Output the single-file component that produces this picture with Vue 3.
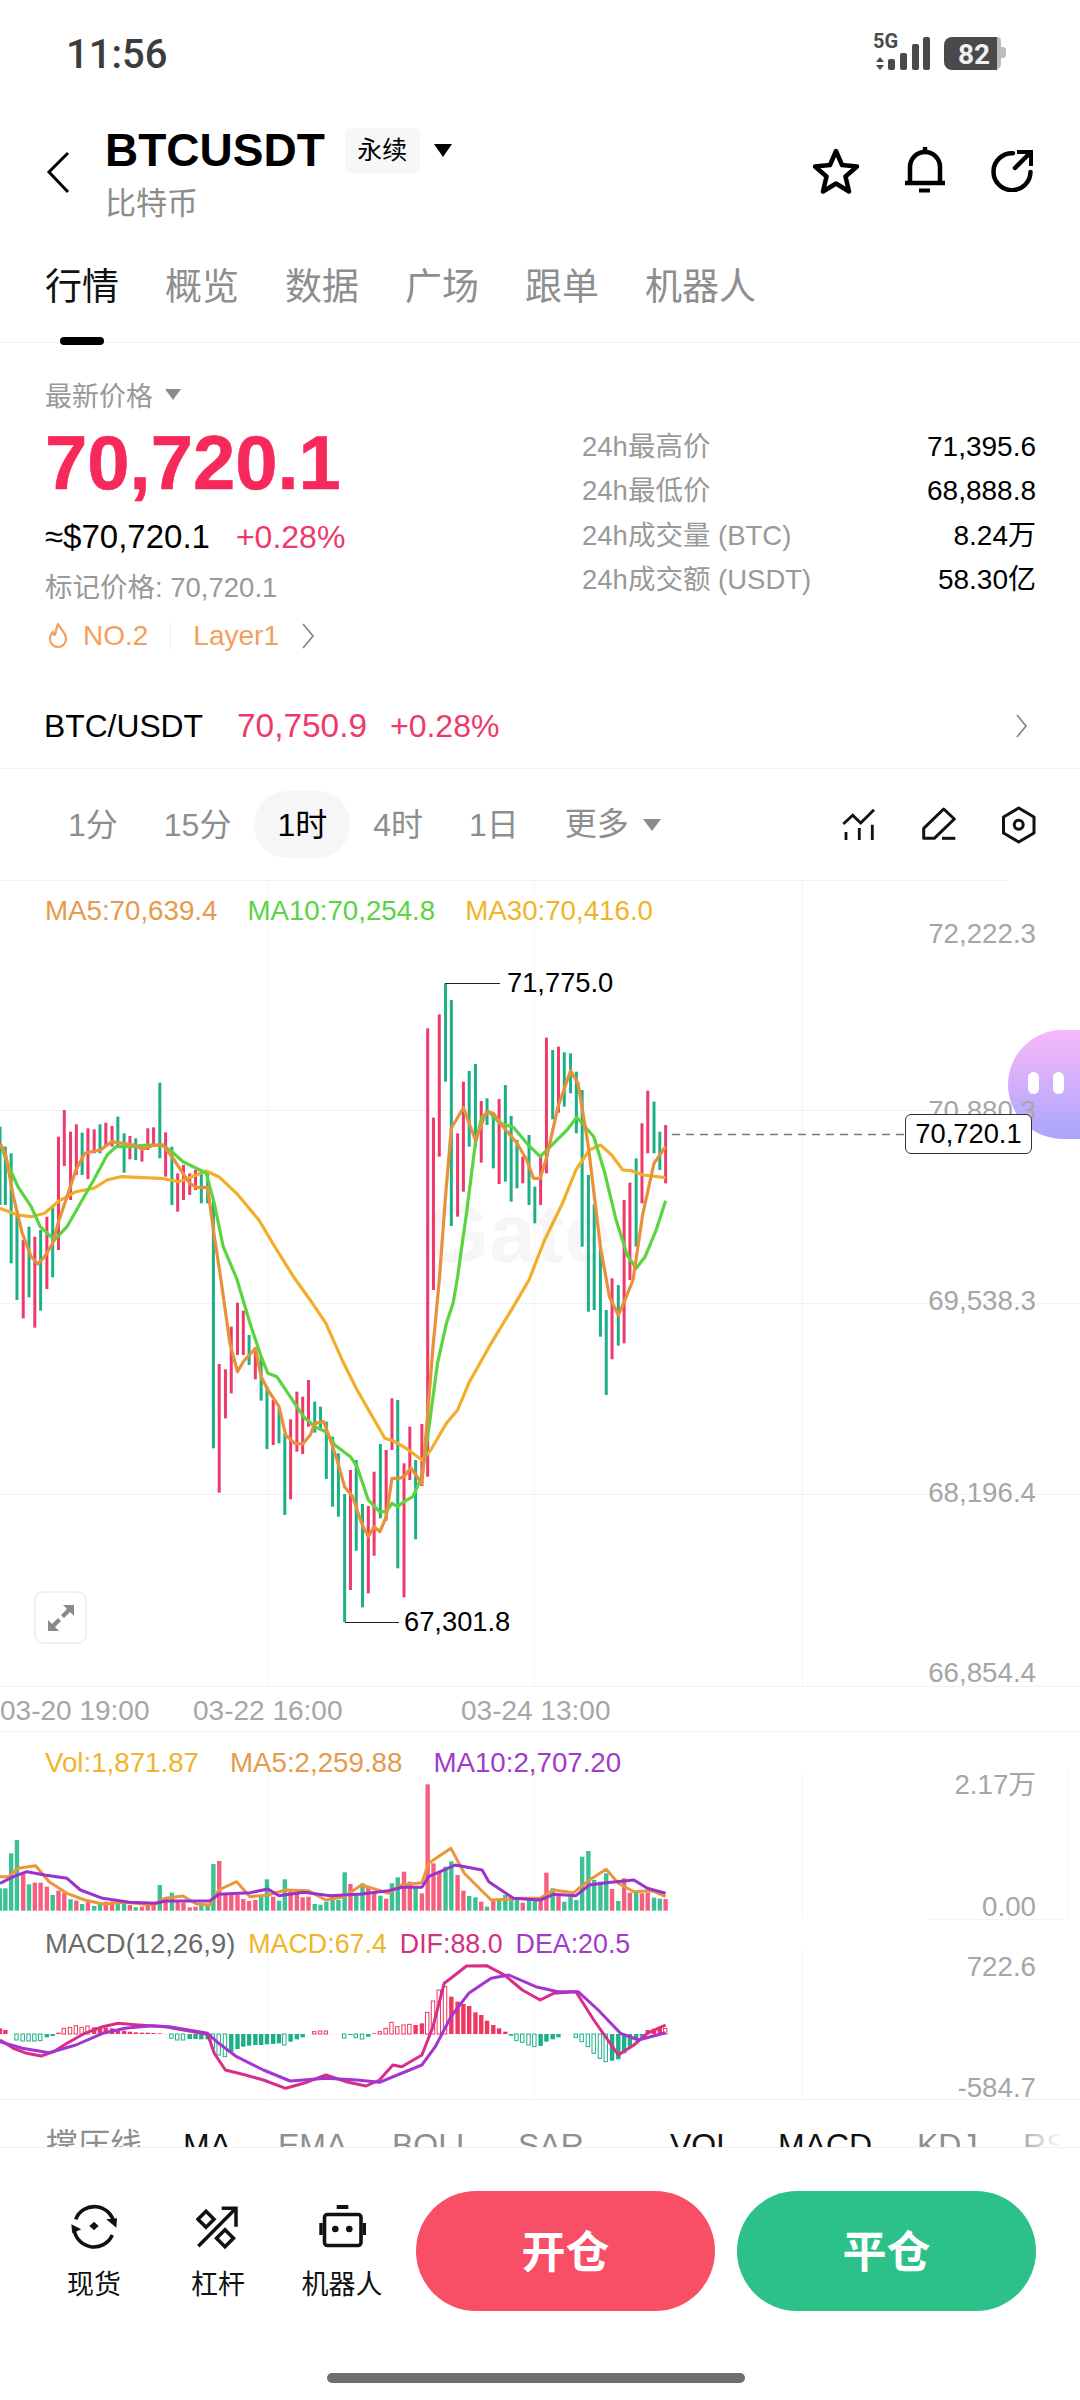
<template>
  <div class="page">
    <!-- 状态栏 -->
    <div class="status-bar">
      <span class="time">11:56</span>
      <svg class="status-icons" width="140" height="40" viewBox="0 0 140 40">
        <text x="0" y="13" class="net">5G</text>
        <path d="M7 22l4 5H3zM7 35l4-5H3z" fill="#4a4a4a" />
        <rect x="15" y="24" width="7" height="11" rx="2" fill="#4a4a4a" />
        <rect x="27" y="18" width="7" height="17" rx="2" fill="#4a4a4a" />
        <rect x="39" y="9" width="7" height="26" rx="2" fill="#4a4a4a" />
        <rect x="50" y="2" width="7" height="33" rx="2" fill="#4a4a4a" />
        <path d="M120 2h4a4 4 0 0 1 4 4v6h2a3 3 0 0 1 3 3v5a3 3 0 0 1-3 3h-2v6a6 6 0 0 1-6 6h-4z" fill="#bcbcbc" />
        <path d="M79 2h45v33H79a8 8 0 0 1-8-8V10a8 8 0 0 1 8-8z" fill="#4a4a4a" />
        <text x="85" y="29" class="batt">82</text>
      </svg>
    </div>

    <!-- 头部 -->
    <div class="header">
      <svg class="back" width="30" height="44" viewBox="0 0 30 44" fill="none">
        <path d="M24 3L5 22l19 20" stroke="#000" stroke-width="3" transform="translate(-1 0)" />
      </svg>
      <div class="title-box">
        <div class="title-line">
          <span class="symbol">BTCUSDT</span>
          <span class="perp">永续</span>
          <span class="tri tri-black"></span>
        </div>
        <div class="subname">比特币</div>
      </div>
      <div class="header-icons">
        <svg width="46" height="46" viewBox="0 0 46 46" fill="none" stroke="#000" stroke-width="4.5" stroke-linejoin="round">
          <path d="M23 3l6 14 15 1.500-11.500 10 3.500 15L23 35.500 10 43.500l3.500-15L2 18.500 17 17z" />
        </svg>
        <svg width="40" height="48" viewBox="0 0 40 48" fill="none" stroke="#000" stroke-width="4.500">
          <path d="M5 34V20a15 15 0 0 1 30 0v14" />
          <path d="M0 36h40" />
          <path d="M14 43.500h11" stroke-width="4" />
          <path d="M20 1v4" stroke-linecap="round" />
        </svg>
        <svg width="42" height="42" viewBox="0 0 42 42" fill="none" stroke="#000" stroke-width="4.500">
          <path d="M22 3.200A18.500 18.500 0 1 0 39.500 22" stroke-linecap="round" />
          <path d="M24 18L39 3" stroke-linecap="round" />
          <path d="M26 2h14v14" stroke-width="4" />
        </svg>
      </div>
    </div>

    <!-- 标签 -->
    <div class="tabs">
      <span v-for="(t, i) in tabs" :key="t" class="tab" :class="{ active: i === 0 }">{{ t }}</span>
    </div>

    <!-- 价格 -->
    <div class="price-section">
      <div class="price-left">
        <div class="price-label">最新价格<span class="tri tri-gray"></span></div>
        <div class="last-price">70,720.1</div>
        <div class="approx">≈$70,720.1<span class="rise">+0.28%</span></div>
        <div class="mark">标记价格: 70,720.1</div>
        <div class="hot">
          <svg width="20" height="26" viewBox="0 0 20 26" fill="none">
            <path d="M10 1c1 4 8 8 8 15a8 8 0 0 1-16 0c0-3 1-5 3-7 0 2 1 3 2 3 1-3 1-7 3-11z" stroke="#f2a05c" stroke-width="2.200" stroke-linejoin="round" />
          </svg>
          <span class="hot-no">NO.2</span>
          <i class="hot-sep"></i>
          <span>Layer1</span>
          <svg class="hot-arrow" width="14" height="26" viewBox="0 0 14 26" fill="none">
            <path d="M2 1l10 12L2 25" stroke="#888" stroke-width="1.800" />
          </svg>
        </div>
      </div>
      <div class="stats">
        <div v-for="s in stats" :key="s.label" class="stat-row">
          <span class="stat-label">{{ s.label }}</span>
          <span class="stat-value">{{ s.value }}</span>
        </div>
      </div>
    </div>

    <!-- 现货 -->
    <div class="spot-row">
      <span class="spot-name">BTC/USDT</span>
      <span class="rise spot-price">70,750.9</span>
      <span class="rise spot-pct">+0.28%</span>
      <svg class="spot-arrow" width="12" height="24" viewBox="0 0 12 24" fill="none">
        <path d="M1 1l9 11-9 11" stroke="#888" stroke-width="1.800" />
      </svg>
    </div>

    <!-- 周期 -->
    <div class="interval-bar">
      <span v-for="(p, i) in periods" :key="p" class="period" :class="{ on: i === 2 }">{{ p }}</span>
      <span class="period more">更多<span class="tri tri-gray2"></span></span>
      <div class="tool-icons">
        <svg width="34" height="34" viewBox="0 0 34 34" fill="none" stroke="#111" stroke-width="2.800">
          <path d="M1.300 16l9.400-8.700 8 7.700L32 1.700" />
          <path d="M4 24v8M17.300 20v12M30.300 16.700V32" />
        </svg>
        <svg width="37" height="36" viewBox="0 0 37 36" fill="none" stroke="#111" stroke-width="3" stroke-linejoin="round">
          <path d="M2.700 21.300L22.700 2l10.600 10-20 19.300H2.700z" />
          <path d="M21 31.300h13.300" />
        </svg>
        <svg width="34" height="38" viewBox="0 0 34 38" fill="none" stroke="#111" stroke-width="3" stroke-linejoin="round">
          <path d="M16.700 2L32 11v16l-15.300 9-15.200-9V11z" />
          <circle cx="16.700" cy="18.700" r="4.500" />
        </svg>
      </div>
    </div>

    <!-- 主图 -->
    <div class="panel main-panel">
      <div class="bubble"><i></i><i></i></div>
      <svg class="plot" width="1080" height="806" viewBox="0 0 1080 806">
        <path d="M0 0.500H1008M0 230.500H1008M0 423.500H1080M0 614.500H1080" stroke="#f3f3f3" />
        <path d="M267.500 0V806M534.500 0V806M802.500 0V806" stroke="#f5f5f5" />
        <text x="424" y="382" class="mark-logo">Gate</text>
        <rect v-for="(c, i) in candles" :key="i" :x="c.x" :y="c.y" width="3" :height="c.h" :fill="c.color" />
        <polyline :points="ma30" fill="none" stroke="#f2ae2a" stroke-width="3.200" stroke-linejoin="round" />
        <polyline :points="ma10" fill="none" stroke="#5ad43f" stroke-width="3.200" stroke-linejoin="round" />
        <polyline :points="ma5" fill="none" stroke="#e8913a" stroke-width="3.200" stroke-linejoin="round" />
        <path d="M445 103.500H500M345 742.500H399" stroke="#222" stroke-width="1.200" fill="none" />
        <text x="507" y="112" class="ann">71,775.0</text>
        <text x="404" y="751" class="ann">67,301.8</text>
        <text x="1036" y="63" class="axis" text-anchor="end">72,222.3</text>
        <text x="1036" y="240" class="axis" text-anchor="end">70,880.3</text>
        <text x="1036" y="430" class="axis" text-anchor="end">69,538.3</text>
        <text x="1036" y="622" class="axis" text-anchor="end">68,196.4</text>
        <text x="1036" y="802" class="axis" text-anchor="end">66,854.4</text>
        <path d="M672 254.500H905" stroke="#777" stroke-width="1.500" stroke-dasharray="8 6" />
      </svg>
      <div class="legend main-legend">
        <span class="c-ma5">MA5:70,639.4</span>
        <span class="c-ma10">MA10:70,254.8</span>
        <span class="c-ma30">MA30:70,416.0</span>
      </div>
      <div class="last-tag">70,720.1</div>
      <div class="expand">
        <svg width="30" height="30" viewBox="0 0 30 30" fill="#8a8a8a">
          <path d="M17 2h11v11l-4-4-6 6-3-3 6-6zM13 28H2V17l4 4 6-6 3 3-6 6z" />
        </svg>
      </div>
    </div>

    <!-- 时间轴 -->
    <div class="time-axis">
      <span class="t1">03-20 19:00</span>
      <span class="t2">03-22 16:00</span>
      <span class="t3">03-24 13:00</span>
    </div>

    <!-- 成交量 -->
    <div class="panel vol-panel">
      <svg class="plot" width="1080" height="188" viewBox="0 0 1080 188">
        <path d="M267.500 38V187M534.500 38V187M802.500 38V187M1068.500 38V187" stroke="#f6f6f6" />
        <path d="M930 187.500H1068" stroke="#f5f5f5" />
        <rect v-for="(b, i) in volBars" :key="i" :x="b.x" :y="b.y" width="4.400" :height="b.h" :fill="b.color" />
        <polyline :points="volMa5" fill="none" stroke="#ea973a" stroke-width="3" stroke-linejoin="round" />
        <polyline :points="volMa10" fill="none" stroke="#9c32cc" stroke-width="3" stroke-linejoin="round" />
        <text x="1036" y="62" class="axis" text-anchor="end">2.17万</text>
        <text x="1036" y="184" class="axis" text-anchor="end">0.00</text>
      </svg>
      <div class="legend vol-legend">
        <span class="c-vol">Vol:1,871.87</span>
        <span class="c-ma5">MA5:2,259.88</span>
        <span class="c-purple">MA10:2,707.20</span>
      </div>
    </div>

    <!-- MACD -->
    <div class="panel macd-panel">
      <svg class="plot" width="1080" height="180" viewBox="0 0 1080 180">
        <path d="M267.500 30V180M534.500 30V180M802.500 30V180" stroke="#f6f6f6" />
        <path d="M0 114.500H670" stroke="#f6f6f6" />
        <rect
          v-for="(b, i) in macdBars"
          :key="i"
          :x="b.x"
          :y="b.y"
          :width="b.hollow ? 3.400 : 4.400"
          :height="b.h"
          :fill="b.hollow ? '#fff' : b.color"
          :stroke="b.hollow ? b.color : 'none'"
          stroke-width="1"
        />
        <polyline :points="dif" fill="none" stroke="#d92d8a" stroke-width="3" stroke-linejoin="round" />
        <polyline :points="dea" fill="none" stroke="#a535d0" stroke-width="3" stroke-linejoin="round" />
        <text x="1036" y="56" class="axis" text-anchor="end">722.6</text>
        <text x="1036" y="177" class="axis" text-anchor="end">-584.7</text>
      </svg>
      <div class="legend macd-legend">
        <span class="c-gray">MACD(12,26,9)</span>
        <span class="c-vol">MACD:67.4</span>
        <span class="c-dif">DIF:88.0</span>
        <span class="c-purple">DEA:20.5</span>
      </div>
    </div>

    <!-- 指标切换，被底栏遮住 -->
    <div class="indicators">
      <span v-for="n in indicators" :key="n.name" :class="{ dark: n.on }" :style="{ width: n.w + 'px' }">{{ n.name }}</span>
    </div>

    <!-- 底栏 -->
    <div class="footer">
      <div class="footer-row">
        <div class="tool">
          <svg width="48" height="48" viewBox="0 0 48 48" fill="none" stroke="#111" stroke-width="3.600">
            <path d="M5.700 17.300A20 20 0 0 1 44 21" />
            <path d="M42.300 33A20 20 0 0 1 4 26" />
            <path d="M36.300 17.300L47 16.300l-.7 9.400zM1.300 22.300l10 5-9 4z" fill="#111" stroke="none" />
            <path d="M24 19.700l4.700 4.300-4.700 4.300-4.700-4.300z" fill="#111" stroke="none" />
          </svg>
          <span>现货</span>
        </div>
        <div class="tool">
          <svg width="44" height="48" viewBox="0 0 44 48" fill="none" stroke="#111" stroke-width="3.500">
            <path d="M2.300 44.300L39 7.300" />
            <path d="M25.700 6.300H40v18.400" />
            <path d="M10 9.300l8 8-8 8-8-8z" />
            <path d="M29 27.800l8.500 8.500-8.500 8.500-8.500-8.500z" />
          </svg>
          <span>杠杆</span>
        </div>
        <div class="tool">
          <svg width="48" height="48" viewBox="0 0 48 48" fill="none" stroke="#111" stroke-width="3.600">
            <rect x="6.500" y="12.500" width="36.500" height="31" rx="3" />
            <path d="M18.700 5h11.600" stroke-width="4" />
            <path d="M3 21v12M46.300 21v12" stroke-width="3.400" />
            <circle cx="17.300" cy="27" r="3.300" fill="#111" stroke="none" />
            <circle cx="31.300" cy="27" r="3.300" fill="#111" stroke="none" />
          </svg>
          <span>机器人</span>
        </div>
        <button class="trade open">开仓</button>
        <button class="trade close">平仓</button>
      </div>
      <div class="home-bar"></div>
    </div>
  </div>
</template>

<script setup>
const tabs = ['行情', '概览', '数据', '广场', '跟单', '机器人']
const periods = ['1分', '15分', '1时', '4时', '1日']

const stats = [
  { label: '24h最高价', value: '71,395.6' },
  { label: '24h最低价', value: '68,888.8' },
  { label: '24h成交量 (BTC)', value: '8.24万' },
  { label: '24h成交额 (USDT)', value: '58.30亿' },
]

const indicators = [
  { name: '撑压线', w: 137 },
  { name: 'MA', w: 95, on: true },
  { name: 'EMA', w: 114 },
  { name: 'BOLL', w: 126 },
  { name: 'SAR', w: 152 },
  { name: 'VOL', w: 108, on: true },
  { name: 'MACD', w: 139, on: true },
  { name: 'KDJ', w: 106 },
  { name: 'RSI', w: 60 },
]

const GREEN = '#1db088'
const PINK = '#ee3a6a'

// 数据按参考图量出来：x 除 2.24，y 除 3
const SX = 2.24
const SY = 3

// [x, 颜色, 上, 下]
const rawCandles = [
  [0, 'g', 740, 975], [12, 'g', 800, 975], [25, 'g', 820, 1150], [38, 'g', 1000, 1260], [52, 'p', 1080, 1315],
  [65, 'g', 1040, 1252], [78, 'p', 1070, 1343], [91, 'g', 1050, 1292], [105, 'p', 1010, 1227], [118, 'g', 975, 1192],
  [131, 'p', 770, 1110], [144, 'p', 690, 858], [158, 'p', 755, 960], [171, 'p', 733, 885], [184, 'g', 758, 885],
  [197, 'p', 745, 897], [211, 'p', 748, 820], [224, 'g', 733, 820], [237, 'p', 728, 800], [251, 'p', 738, 800],
  [264, 'g', 710, 800], [278, 'g', 760, 878], [291, 'p', 768, 838], [304, 'g', 775, 840], [318, 'p', 800, 845],
  [331, 'p', 745, 810], [344, 'p', 742, 800], [358, 'g', 608, 835], [371, 'p', 757, 890], [385, 'g', 800, 975],
  [398, 'p', 880, 995], [411, 'p', 855, 960], [425, 'p', 880, 945], [438, 'p', 870, 930], [451, 'g', 870, 970],
  [465, 'g', 880, 970], [478, 'g', 955, 1705], [491, 'p', 1452, 1838], [505, 'p', 1468, 1615], [518, 'p', 1340, 1540],
  [532, 'p', 1268, 1425], [545, 'p', 1292, 1425], [558, 'g', 1365, 1455], [572, 'p', 1410, 1498], [585, 'g', 1430, 1562],
  [598, 'g', 1520, 1707], [612, 'p', 1560, 1695], [625, 'g', 1585, 1690], [638, 'g', 1660, 1905], [651, 'p', 1618, 1858],
  [665, 'p', 1535, 1715], [678, 'p', 1550, 1722], [691, 'p', 1500, 1640], [705, 'g', 1565, 1658], [718, 'g', 1580, 1650],
  [731, 'g', 1625, 1797], [745, 'g', 1670, 1880], [758, 'g', 1720, 1910], [772, 'g', 1842, 2226], [785, 'p', 1770, 2130],
  [798, 'g', 1740, 2012], [812, 'g', 1872, 2182], [825, 'p', 1878, 2140], [838, 'p', 1775, 2027], [852, 'g', 1692, 1915],
  [865, 'p', 1710, 1922], [878, 'p', 1555, 1710], [891, 'g', 1560, 2065], [905, 'p', 1750, 2152], [918, 'p', 1640, 1800],
  [931, 'g', 1740, 1978], [945, 'p', 1632, 1818], [958, 'p', 445, 1790], [971, 'p', 713, 1230], [984, 'p', 403, 830],
  [998, 'g', 310, 605], [1011, 'g', 360, 1038], [1025, 'p', 760, 1010], [1038, 'p', 605, 935], [1051, 'g', 573, 800],
  [1065, 'g', 552, 800], [1078, 'p', 663, 848], [1091, 'g', 655, 735], [1105, 'g', 700, 865], [1118, 'p', 657, 912],
  [1132, 'g', 615, 905], [1145, 'g', 708, 965], [1158, 'g', 780, 925], [1171, 'p', 830, 910], [1185, 'g', 765, 975],
  [1198, 'g', 920, 1030], [1211, 'p', 830, 975], [1224, 'p', 473, 880], [1238, 'g', 510, 718], [1251, 'p', 500, 698],
  [1264, 'g', 517, 680], [1278, 'g', 520, 640], [1291, 'g', 575, 760], [1304, 'g', 630, 1100], [1318, 'g', 885, 1295],
  [1331, 'g', 973, 1290], [1345, 'g', 1100, 1370], [1358, 'g', 1290, 1545], [1371, 'p', 1195, 1438], [1385, 'g', 1215, 1397],
  [1398, 'p', 960, 1390], [1411, 'p', 908, 1200], [1425, 'g', 835, 1100], [1438, 'p', 730, 970], [1451, 'p', 632, 820],
  [1465, 'g', 665, 820], [1478, 'g', 755, 870], [1491, 'p', 735, 910],
]

const candles = rawCandles.map(([x, c, top, bottom]) => ({
  x: x / SX - 1.5,
  y: top / SY,
  h: (bottom - top) / SY,
  color: c === 'g' ? GREEN : PINK,
}))

const mainLine = (pts) => pts.map(([x, y]) => `${(x / SX).toFixed(1)},${(y / SY).toFixed(1)}`).join(' ')

const ma5 = mainLine([
  [0, 790], [12, 820], [30, 950], [50, 1060], [70, 1130], [85, 1152], [100, 1130], [118, 1090], [130, 1030], [150, 950],
  [170, 870], [190, 820], [205, 815], [225, 810], [250, 785], [275, 790], [300, 795], [320, 808], [340, 797], [365, 795],
  [385, 830], [410, 880], [425, 910], [440, 922], [465, 922], [478, 1050], [495, 1200], [515, 1390], [532, 1475], [545, 1445],
  [572, 1405], [585, 1490], [600, 1530], [625, 1580], [640, 1665], [660, 1690], [678, 1692], [695, 1665], [705, 1630], [725, 1625],
  [740, 1680], [755, 1740], [772, 1820], [790, 1850], [810, 1930], [825, 1970], [838, 1940], [851, 1955], [865, 1910], [878, 1795],
  [895, 1795], [905, 1790], [920, 1763], [945, 1810], [958, 1600], [970, 1400], [984, 1200], [998, 950], [1011, 745], [1038, 683],
  [1065, 780], [1090, 695], [1105, 700], [1130, 745], [1158, 790], [1180, 840], [1195, 895], [1210, 895], [1225, 830], [1250, 680],
  [1278, 572], [1295, 610], [1318, 800], [1345, 1100], [1365, 1250], [1385, 1305], [1400, 1260], [1418, 1200], [1440, 1000], [1465, 850],
  [1491, 800],
])

const ma10 = mainLine([
  [0, 790], [20, 860], [40, 920], [70, 980], [90, 1040], [122, 1080], [150, 1040], [180, 970], [210, 900], [240, 825],
  [260, 800], [290, 800], [330, 795], [365, 795], [385, 815], [410, 845], [440, 865], [462, 880], [480, 970], [500, 1100],
  [530, 1195], [560, 1330], [585, 1430], [600, 1480], [620, 1490], [650, 1550], [680, 1610], [705, 1640], [730, 1655], [750, 1695],
  [785, 1730], [800, 1760], [825, 1860], [850, 1895], [865, 1895], [878, 1870], [890, 1880], [905, 1865], [925, 1850], [945, 1790],
  [960, 1650], [980, 1450], [1000, 1330], [1015, 1270], [1025, 1190], [1045, 1000], [1065, 790], [1080, 710], [1095, 695], [1120, 730],
  [1150, 742], [1180, 790], [1210, 830], [1240, 790], [1270, 750], [1292, 712], [1330, 770], [1355, 880], [1380, 1020], [1405, 1125],
  [1425, 1165], [1445, 1130], [1470, 1050], [1491, 962],
])

const ma30 = mainLine([
  [0, 985], [40, 1005], [70, 1010], [100, 1000], [130, 965], [170, 935], [210, 925], [240, 900], [270, 890], [320, 893],
  [360, 895], [400, 905], [430, 890], [462, 873], [490, 890], [530, 940], [580, 1020], [620, 1110], [660, 1195], [700, 1270],
  [730, 1330], [770, 1450], [800, 1530], [830, 1600], [862, 1675], [880, 1682], [910, 1705], [945, 1740], [965, 1710], [1000, 1630],
  [1025, 1590], [1050, 1510], [1100, 1390], [1150, 1280], [1185, 1200], [1220, 1080], [1260, 970], [1290, 870], [1320, 810], [1345, 795],
  [1370, 825], [1395, 870], [1415, 872], [1440, 885], [1491, 893],
])

// 副图 y：1700 + z / 3，减去面板顶部
const VOL_TOP = 1732
const MACD_TOP = 1920
const subLine = (pts, top) => pts.map(([x, y]) => `${(x / SX).toFixed(1)},${(1700 + y / SY - top).toFixed(1)}`).join(' ')

const rawVol = [
  [0, 'g', 565], [12, 'g', 565], [25, 'g', 460], [38, 'g', 420], [52, 'p', 520], [65, 'g', 553], [78, 'p', 548], [91, 'p', 548], [105, 'p', 560],
  [118, 'g', 585], [131, 'p', 572], [144, 'p', 578], [158, 'g', 598], [171, 'p', 602], [184, 'g', 612], [197, 'p', 605], [211, 'g', 618],
  [224, 'g', 612], [237, 'p', 605], [251, 'p', 605], [264, 'g', 610], [278, 'g', 610], [291, 'p', 615], [304, 'g', 622], [318, 'p', 620],
  [331, 'p', 615], [344, 'p', 612], [358, 'g', 555], [371, 'p', 592], [385, 'g', 578], [398, 'p', 605], [411, 'p', 608], [425, 'p', 622],
  [438, 'p', 620], [451, 'g', 612], [465, 'g', 618], [478, 'g', 492], [491, 'p', 483], [505, 'p', 585], [518, 'p', 585], [532, 'p', 585],
  [545, 'p', 597], [558, 'p', 603], [572, 'p', 600], [585, 'g', 590], [598, 'g', 538], [612, 'p', 590], [625, 'g', 602], [638, 'g', 538],
  [651, 'p', 575], [665, 'p', 575], [678, 'p', 592], [691, 'p', 590], [705, 'g', 612], [718, 'g', 614], [731, 'g', 605], [745, 'g', 590],
  [758, 'g', 600], [772, 'g', 517], [785, 'p', 552], [798, 'g', 585], [812, 'g', 550], [825, 'p', 560], [838, 'p', 575], [852, 'g', 587],
  [865, 'p', 596], [878, 'g', 550], [891, 'g', 532], [905, 'p', 515], [918, 'p', 545], [931, 'g', 560], [945, 'p', 580], [958, 'p', 253],
  [971, 'p', 490], [984, 'p', 515], [998, 'g', 500], [1011, 'g', 484], [1025, 'p', 525], [1038, 'p', 572], [1051, 'g', 588], [1065, 'g', 592],
  [1078, 'p', 605], [1091, 'g', 620], [1105, 'p', 600], [1118, 'g', 600], [1132, 'g', 585], [1145, 'g', 595], [1158, 'g', 600], [1171, 'p', 608],
  [1185, 'g', 600], [1198, 'g', 600], [1211, 'p', 598], [1224, 'p', 518], [1238, 'g', 565], [1251, 'p', 585], [1264, 'g', 605], [1278, 'g', 590],
  [1291, 'g', 600], [1304, 'g', 470], [1318, 'g', 453], [1331, 'g', 540], [1345, 'g', 545], [1358, 'g', 520], [1371, 'p', 567], [1385, 'g', 603],
  [1398, 'p', 535], [1411, 'p', 578], [1425, 'g', 578], [1438, 'p', 580], [1451, 'p', 578], [1465, 'g', 593], [1478, 'g', 596], [1491, 'p', 597],
]

const volBars = rawVol.map(([x, c, top]) => ({
  x: x / SX - 2.2,
  y: 1700 + top / SY - VOL_TOP,
  h: (632 - top) / SY,
  color: c === 'g' ? '#3cc194' : '#f75f7e',
}))

const volMa5 = subLine([
  [0, 530], [20, 530], [40, 505], [80, 497], [110, 545], [150, 580], [190, 600], [230, 612], [280, 607], [340, 615],
  [370, 595], [410, 588], [440, 612], [470, 615], [490, 570], [530, 545], [560, 590], [600, 585], [640, 570], [690, 572],
  [730, 600], [770, 590], [810, 555], [870, 580], [900, 555], [945, 548], [960, 490], [1010, 445], [1040, 520], [1100, 600],
  [1170, 595], [1210, 595], [1240, 570], [1285, 578], [1320, 540], [1358, 508], [1385, 550], [1420, 575], [1460, 572], [1491, 590],
], VOL_TOP)

const volMa10 = subLine([
  [0, 550], [30, 530], [60, 515], [100, 525], [150, 535], [180, 570], [230, 595], [290, 607], [350, 610], [370, 603],
  [470, 603], [490, 583], [560, 578], [600, 567], [625, 587], [680, 577], [740, 587], [810, 582], [870, 572], [900, 562],
  [945, 562], [960, 530], [1020, 495], [1080, 510], [1095, 545], [1150, 595], [1210, 600], [1240, 583], [1290, 587], [1320, 555],
  [1358, 548], [1420, 540], [1450, 565], [1491, 580],
], VOL_TOP)

const ZERO = 1002
// [x, 端点 y, 是否空心]
const rawMacd = [
  [0, 985, 0], [12, 990, 0], [38, 1020, 1], [52, 1023, 1], [65, 1023, 1], [78, 1023, 1], [91, 1022, 1], [105, 1012, 0], [118, 1008, 0], [131, 998, 0],
  [144, 985, 1], [158, 982, 1], [171, 977, 1], [184, 982, 1], [197, 978, 1], [211, 982, 0], [224, 982, 0], [237, 983, 0], [251, 985, 0], [264, 988, 0],
  [278, 992, 0], [291, 995, 0], [304, 997, 0], [318, 998, 0], [331, 998, 0], [344, 999, 0], [358, 1000, 0], [385, 1015, 1], [398, 1020, 1], [411, 1020, 1],
  [425, 1017, 0], [438, 1017, 0], [451, 1018, 0], [465, 1018, 0], [478, 1045, 1], [491, 1065, 1], [505, 1070, 1], [518, 1055, 0], [532, 1047, 0], [545, 1040, 0],
  [558, 1037, 0], [572, 1035, 0], [585, 1035, 0], [598, 1033, 0], [612, 1032, 0], [625, 1030, 0], [638, 1035, 1], [651, 1025, 0], [665, 1018, 0], [678, 1012, 0],
  [705, 995, 1], [718, 993, 1], [731, 993, 1], [772, 1014, 1], [785, 1005, 0], [798, 1013, 1], [812, 1017, 1], [825, 1010, 0], [838, 1000, 0], [852, 995, 1],
  [865, 985, 1], [878, 967, 1], [891, 980, 1], [905, 975, 1], [918, 973, 1], [931, 975, 0], [945, 970, 0], [958, 937, 1], [971, 903, 1], [984, 870, 1],
  [998, 860, 1], [1011, 890, 0], [1025, 905, 0], [1038, 912, 0], [1051, 918, 0], [1065, 937, 0], [1078, 945, 0], [1091, 962, 0], [1105, 975, 0], [1118, 985, 0],
  [1132, 995, 0], [1145, 1007, 0], [1158, 1022, 1], [1171, 1027, 1], [1185, 1035, 1], [1198, 1040, 1], [1211, 1038, 0], [1224, 1025, 0], [1238, 1018, 0], [1251, 1012, 0],
  [1291, 1012, 1], [1304, 1025, 1], [1318, 1040, 1], [1331, 1060, 1], [1345, 1075, 1], [1358, 1085, 1], [1371, 1082, 0], [1385, 1078, 0], [1398, 1060, 0], [1411, 1040, 0],
  [1425, 1020, 0], [1438, 1010, 0], [1451, 990, 0], [1465, 986, 0], [1478, 980, 0], [1491, 985, 1],
]

const macdBars = rawMacd.map(([x, end, hollow]) => ({
  x: x / SX - 2.2,
  y: 1700 + Math.min(end, ZERO) / SY - MACD_TOP,
  h: Math.abs(end - ZERO) / SY,
  hollow: !!hollow,
  color: end > ZERO ? '#1db088' : '#f0385f',
}))

const dif = subLine([
  [0, 1020], [30, 1045], [60, 1060], [92, 1068], [120, 1055], [150, 1030], [190, 1000], [230, 980], [265, 970], [310, 975],
  [370, 980], [420, 992], [465, 1003], [480, 1060], [505, 1110], [550, 1125], [590, 1140], [640, 1165], [680, 1150], [730, 1125],
  [775, 1145], [820, 1158], [850, 1140], [880, 1095], [900, 1100], [945, 1065], [970, 980], [995, 850], [1010, 835], [1045, 798],
  [1090, 797], [1130, 825], [1170, 870], [1210, 900], [1240, 880], [1290, 875], [1330, 960], [1385, 1065], [1420, 1035], [1450, 1000],
  [1491, 975],
], MACD_TOP)

const dea = subLine([
  [0, 1025], [50, 1045], [110, 1058], [170, 1035], [230, 1000], [280, 985], [340, 977], [380, 980], [465, 1000], [490, 1030],
  [530, 1070], [590, 1110], [650, 1143], [730, 1135], [800, 1140], [850, 1147], [890, 1125], [945, 1095], [975, 1040], [1010, 950],
  [1050, 880], [1100, 835], [1140, 825], [1200, 860], [1250, 875], [1295, 875], [1340, 930], [1390, 1000], [1430, 1020], [1491, 998],
], MACD_TOP)
</script>

<style>
html,
body {
  margin: 0;
  background: #fff;
}
</style>

<style scoped>
.page {
  width: 1080px;
  height: 2400px;
  overflow: hidden;
  background: #fff;
  color: #000;
  font-family: "Liberation Sans", "Noto Sans CJK SC", sans-serif;
}

.tri {
  display: inline-block;
  width: 0;
  height: 0;
  border-style: solid;
  border-color: transparent;
}

/* 状态栏 */
.status-bar {
  height: 110px;
  position: relative;
}

.time {
  position: absolute;
  left: 66px;
  top: 32px;
  font-family: Roboto, sans-serif;
  font-size: 40px;
  font-weight: 500;
  line-height: 46px;
  color: #3c3c3c;
}

.status-icons {
  position: absolute;
  left: 873px;
  top: 35px;
  overflow: visible;
}

.net {
  font: 700 20px Roboto, sans-serif;
  fill: #4a4a4a;
}

.batt {
  font: 700 28px Roboto, sans-serif;
  fill: #f0f0f0;
}

/* 头部 */
.header {
  height: 140px;
  display: flex;
  position: relative;
}

.back {
  margin: 40px 0 0 45px;
}

.title-box {
  margin-left: 30px;
}

.title-line {
  display: flex;
  align-items: center;
  height: 70px;
  margin-top: 5px;
}

.symbol {
  font-size: 46px;
  font-weight: 700;
}

.perp {
  width: 75px;
  height: 45px;
  margin-left: 20px;
  border-radius: 6px;
  background: #f7f7f7;
  font-size: 25px;
  line-height: 45px;
  text-align: center;
}

.tri-black {
  margin-left: 14px;
  border-width: 13px 9px 0;
  border-top-color: #000;
}

.subname {
  margin-top: -1px;
  font-size: 31px;
  line-height: 40px;
  color: #8c8c8c;
}

.header-icons {
  position: absolute;
  left: 813px;
  top: 37px;
  display: flex;
  align-items: center;
  gap: 46px;
}

/* 标签 */
.tabs {
  height: 93px;
  box-sizing: border-box;
  display: flex;
  gap: 46px;
  padding-left: 45px;
  border-bottom: 1px solid #f2f2f2;
}

.tab {
  position: relative;
  height: 74px;
  margin-top: 9px;
  font-size: 37px;
  line-height: 58px;
  color: #8e8e8e;
}

.tab.active {
  color: #111;
}

.tab.active::after {
  content: "";
  position: absolute;
  left: 15px;
  bottom: -12px;
  width: 44px;
  height: 8px;
  border-radius: 4px;
  background: #000;
}

/* 价格 */
.price-section {
  height: 339px;
  box-sizing: border-box;
  display: flex;
  justify-content: space-between;
  padding: 35px 44px 0 45px;
}

.price-label {
  display: flex;
  align-items: center;
  height: 32px;
  font-size: 27px;
  color: #999;
}

.tri-gray {
  margin-left: 12px;
  border-width: 11px 8.500px 0;
  border-top-color: #8c8c8c;
}

.last-price {
  height: 104px;
  font-size: 76px;
  font-weight: 700;
  line-height: 106px;
  color: #f6295a;
  -webkit-text-stroke: 0.6px #f6295a;
}

.approx {
  height: 46px;
  font-size: 33px;
  line-height: 46px;
  white-space: nowrap;
}

.rise {
  color: #ee3a6a;
}

.approx .rise {
  margin-left: 26px;
  font-size: 32px;
}

.mark {
  height: 46px;
  margin-top: 4px;
  font-size: 27.500px;
  line-height: 48px;
  color: #999;
}

.hot {
  display: flex;
  align-items: center;
  height: 48px;
  margin-top: 2px;
  padding-left: 3px;
  font-size: 28px;
  color: #f2a05c;
}

.hot-no {
  margin-left: 15px;
}

.hot-sep {
  width: 1px;
  height: 30px;
  margin: 0 22px;
  background: #f0f0f0;
}

.hot-arrow {
  margin-left: 22px;
}

.stats {
  width: 454px;
  padding-top: 47px;
}

.stat-row {
  display: flex;
  justify-content: space-between;
  height: 44.400px;
  font-size: 27.500px;
  line-height: 44px;
}

.stat-label {
  color: #999;
}

.stat-value {
  font-size: 28px;
}

/* 现货 */
.spot-row {
  height: 87px;
  box-sizing: border-box;
  display: flex;
  align-items: center;
  padding: 2px 52px 0 44px;
  border-bottom: 1px solid #f2f2f2;
  font-size: 32px;
  white-space: nowrap;
}

.spot-name {
  font-size: 31.800px;
}

.spot-price {
  margin-left: 34px;
  font-size: 33.400px;
}

.spot-pct {
  margin-left: 23px;
}

.spot-arrow {
  margin-left: auto;
}

/* 周期 */
.interval-bar {
  height: 111px;
  box-sizing: border-box;
  display: flex;
  align-items: center;
  padding: 0 44px 0 45px;
}

.period {
  height: 67px;
  padding: 0 23px;
  border-radius: 33px;
  font-size: 32px;
  line-height: 69px;
  color: #8e8e8e;
}

.period.on {
  background: #f6f6f6;
  color: #000;
}

.more {
  display: flex;
  align-items: center;
  padding-right: 0;
}

.tri-gray2 {
  margin-left: 14px;
  border-width: 12px 9px 0;
  border-top-color: #8c8c8c;
}

.tool-icons {
  display: flex;
  align-items: center;
  gap: 44.500px;
  margin-left: auto;
}

/* 图表 */
.panel {
  position: relative;
}

.plot {
  display: block;
  position: relative;
  overflow: visible;
}

.main-panel {
  height: 806px;
}

.axis {
  font-size: 27.700px;
  fill: #a6a6a6;
}

.ann {
  font-size: 27.300px;
  fill: #000;
}

.mark-logo {
  font-size: 84px;
  font-weight: 700;
  fill: #f6f6f6;
}

.legend {
  position: absolute;
  top: 0;
  left: 45px;
  display: flex;
  font-size: 27.700px;
  line-height: 34px;
  white-space: nowrap;
}

.main-legend {
  top: 14px;
  gap: 30px;
}

.vol-legend {
  top: 14px;
  gap: 31px;
}

.macd-legend {
  top: 7px;
  gap: 13px;
  font-size: 26.800px;
}

.c-ma5 {
  color: #e59a4c;
}

.c-ma10 {
  color: #5ad43f;
}

.c-ma30,
.c-vol {
  color: #f0b429;
}

.c-purple {
  color: #a03cc8;
}

.c-gray {
  color: #6a6a6a;
  font-size: 27.400px;
}

.c-dif {
  color: #d42f83;
}

.bubble {
  position: absolute;
  left: 1008px;
  top: 150px;
  width: 72px;
  height: 109px;
  display: flex;
  justify-content: center;
  gap: 14px;
  padding: 42px 0 0 4px;
  box-sizing: border-box;
  border-radius: 55px 0 0 55px;
  background: linear-gradient(180deg, #f8b8fa, #a8a6fb);
}

.bubble i {
  width: 11px;
  height: 22px;
  border-radius: 6px;
  background: #fff;
}

.last-tag {
  position: absolute;
  left: 905px;
  top: 234px;
  width: 127px;
  height: 40px;
  box-sizing: border-box;
  border: 1px solid #333;
  border-radius: 6px;
  background: #fff;
  font-size: 27.300px;
  line-height: 38px;
  text-align: center;
}

.expand {
  position: absolute;
  left: 34px;
  top: 711px;
  width: 53px;
  height: 53px;
  display: flex;
  align-items: center;
  justify-content: center;
  box-sizing: border-box;
  border: 2px solid #f0f0f0;
  border-radius: 9px;
  background: #fff;
}

/* 时间轴 */
.time-axis {
  position: relative;
  height: 46px;
  box-sizing: border-box;
  border-top: 1px solid #f3f3f3;
  border-bottom: 1px solid #f3f3f3;
  font-size: 28px;
  line-height: 48px;
  color: #a6a6a6;
}

.time-axis span {
  position: absolute;
  top: 0;
}

.t1 {
  left: 0;
}

.t2 {
  left: 193px;
}

.t3 {
  left: 461px;
}

.vol-panel {
  height: 188px;
}

.macd-panel {
  height: 180px;
  border-bottom: 1px solid #f2f2f2;
  box-sizing: border-box;
}

/* 指标切换 */
.indicators {
  position: relative;
  height: 48px;
  box-sizing: border-box;
  display: flex;
  overflow: hidden;
  padding: 26px 0 0 46px;
  border-bottom: 1px solid #f2f2f2;
  font-size: 32px;
  line-height: 38px;
  color: #8e8e8e;
  white-space: nowrap;
}

.indicators::after {
  content: "";
  position: absolute;
  top: 0;
  right: 0;
  width: 60px;
  height: 100%;
  background: linear-gradient(90deg, rgba(255, 255, 255, 0.2), #fff 70%);
}

.indicators span {
  flex: none;
}

.indicators .dark {
  color: #111;
}

/* 底栏 */
.footer {
  height: 252px;
  padding-top: 43px;
  box-sizing: border-box;
}

.footer-row {
  display: flex;
  align-items: flex-start;
  height: 120px;
  padding-left: 32px;
}

.tool {
  width: 124px;
  display: flex;
  flex-direction: column;
  align-items: center;
  padding-top: 11px;
  font-size: 27px;
  line-height: 34px;
  color: #111;
}

.tool svg {
  margin-bottom: 18px;
}

.trade {
  width: 299px;
  height: 120px;
  padding: 0 0 4px;
  border: none;
  border-radius: 60px;
  font-family: inherit;
  font-size: 44px;
  font-weight: 700;
  color: #fff;
}

.open {
  margin-left: 12px;
  background: #f84f66;
}

.close {
  margin-left: 22px;
  background: #2cc188;
}

.home-bar {
  width: 418px;
  height: 10px;
  margin: 62px 0 0 327px;
  border-radius: 5px;
  background: #6f6f6f;
}
</style>
